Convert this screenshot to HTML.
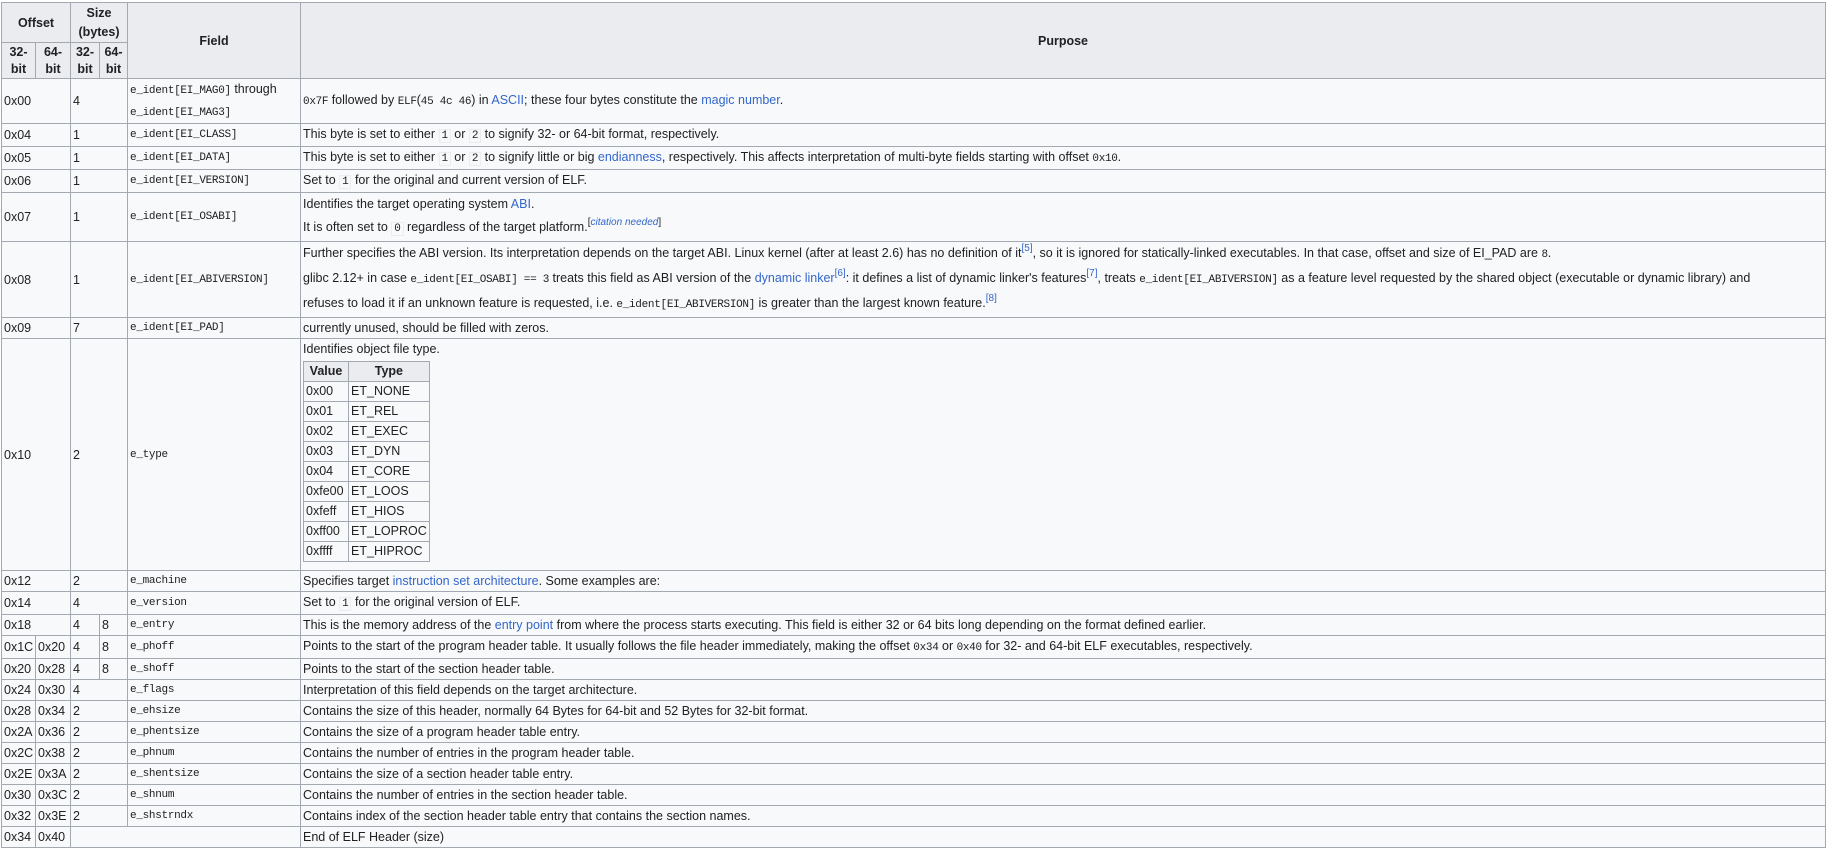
<!DOCTYPE html>
<html><head><meta charset="utf-8"><style>
body{margin:0;background:#fff;font-family:"Liberation Sans","Noto Sans CJK SC",sans-serif;font-size:12.5px;color:#202122}
table.w{position:absolute;left:1px;top:2px;width:1825px;border-collapse:collapse;table-layout:fixed;background:#f8f9fa}
table.w td,table.w th{border:1px solid #a2a9b1;padding:0 2px;vertical-align:middle;line-height:20px;overflow:hidden;white-space:nowrap}
th{background:#eaecf0;font-weight:bold;text-align:center}
code,.m{font-family:"Liberation Mono","Noto Sans CJK SC",monospace;font-size:11px;letter-spacing:-0.3px}
code.b{background:#f8f9fa;border:1px solid #eaecf0;padding:0 2px}
a{color:#3366cc;text-decoration:none}
sup{font-size:10px;line-height:0;vertical-align:6px}
table.n{border-collapse:collapse;margin:2px 0 4px 0;background:#f8f9fa}
table.n td,table.n th{border:1px solid #a2a9b1;padding:0 2px;line-height:19px;height:19px}
</style></head><body>
<table class="w">
<colgroup><col style="width:34px"><col style="width:35px"><col style="width:29px"><col style="width:28px"><col style="width:173px"><col></colgroup>
<tr style="height:40px"><th colspan="2">Offset</th><th colspan="2" style="line-height:19px">Size<br>(bytes)</th><th rowspan="2">Field</th><th rowspan="2">Purpose</th></tr>
<tr style="height:36px"><th style="line-height:17px">32-<br>bit</th><th style="line-height:17px">64-<br>bit</th><th style="line-height:17px">32-<br>bit</th><th style="line-height:17px">64-<br>bit</th></tr>
<tr style="height:43px"><td colspan="2">0x00</td><td colspan="2">4</td><td><span class="m">e_ident[EI_MAG0]</span> through<br><span class="m">e_ident[EI_MAG3]</span></td><td><code>0x7F</code> followed by <code>ELF</code>(<code>45 4c 46</code>) in <a>ASCII</a>; these four bytes constitute the <a>magic number</a>.</td></tr>
<tr style="height:20px"><td colspan="2">0x04</td><td colspan="2">1</td><td class="m">e_ident[EI_CLASS]</td><td>This byte is set to either <code class="b">1</code> or <code class="b">2</code> to signify 32- or 64-bit format, respectively.</td></tr>
<tr style="height:21px"><td colspan="2">0x05</td><td colspan="2">1</td><td class="m">e_ident[EI_DATA]</td><td>This byte is set to either <code class="b">1</code> or <code class="b">2</code> to signify little or big <a>endianness</a>, respectively. This affects interpretation of multi-byte fields starting with offset <code>0x10</code>.</td></tr>
<tr style="height:21px"><td colspan="2">0x06</td><td colspan="2">1</td><td class="m">e_ident[EI_VERSION]</td><td>Set to <code class="b">1</code> for the original and current version of ELF.</td></tr>
<tr style="height:48px"><td colspan="2">0x07</td><td colspan="2">1</td><td class="m">e_ident[EI_OSABI]</td><td style="line-height:23px">Identifies the target operating system <a>ABI</a>.<br>It is often set to <code class="b">0</code> regardless of the target platform.<sup>[<a><i>citation needed</i></a>]</sup></td></tr>
<tr style="height:71px"><td colspan="2">0x08</td><td colspan="2">1</td><td class="m">e_ident[EI_ABIVERSION]</td><td style="line-height:23px">Further specifies the ABI version. Its interpretation depends on the target ABI. Linux kernel (after at least 2.6) has no definition of it<sup><a>[5]</a></sup>, so it is ignored for statically-linked executables. In that case, offset and size of EI_PAD are <code>8</code>.<br>glibc 2.12+ in case <code>e_ident[EI_OSABI] == 3</code> treats this field as ABI version of the <a>dynamic linker</a><sup><a>[6]</a></sup>: it defines a list of dynamic linker's features<sup><a>[7]</a></sup>, treats <code>e_ident[EI_ABIVERSION]</code> as a feature level requested by the shared object (executable or dynamic library) and<br>refuses to load it if an unknown feature is requested, i.e. <code>e_ident[EI_ABIVERSION]</code> is greater than the largest known feature.<sup><a>[8]</a></sup></td></tr>
<tr style="height:21px"><td colspan="2">0x09</td><td colspan="2">7</td><td class="m">e_ident[EI_PAD]</td><td>currently unused, should be filled with zeros.</td></tr>
<tr style="height:232px"><td colspan="2">0x10</td><td colspan="2">2</td><td class="m">e_type</td><td style="vertical-align:top">Identifies object file type.
<table class="n"><tr><th style="width:40px">Value</th><th style="width:66px">Type</th></tr>
<tr><td>0x00</td><td>ET_NONE</td></tr><tr><td>0x01</td><td>ET_REL</td></tr><tr><td>0x02</td><td>ET_EXEC</td></tr><tr><td>0x03</td><td>ET_DYN</td></tr><tr><td>0x04</td><td>ET_CORE</td></tr><tr><td>0xfe00</td><td>ET_LOOS</td></tr><tr><td>0xfeff</td><td>ET_HIOS</td></tr><tr><td>0xff00</td><td>ET_LOPROC</td></tr><tr><td>0xffff</td><td>ET_HIPROC</td></tr></table></td></tr>
<tr style="height:21px"><td colspan="2">0x12</td><td colspan="2">2</td><td class="m">e_machine</td><td>Specifies target <a>instruction set architecture</a>. Some examples are:</td></tr>
<tr style="height:21px"><td colspan="2">0x14</td><td colspan="2">4</td><td class="m">e_version</td><td>Set to <code class="b">1</code> for the original version of ELF.</td></tr>
<tr style="height:20px"><td colspan="2">0x18</td><td>4</td><td>8</td><td class="m">e_entry</td><td>This is the memory address of the <a>entry point</a> from where the process starts executing. This field is either 32 or 64 bits long depending on the format defined earlier.</td></tr>
<tr style="height:21px"><td>0x1C</td><td>0x20</td><td>4</td><td>8</td><td class="m">e_phoff</td><td>Points to the start of the program header table. It usually follows the file header immediately, making the offset <code>0x34</code> or <code>0x40</code> for 32- and 64-bit ELF executables, respectively.</td></tr>
<tr style="height:21px"><td>0x20</td><td>0x28</td><td>4</td><td>8</td><td class="m">e_shoff</td><td>Points to the start of the section header table.</td></tr>
<tr style="height:21px"><td>0x24</td><td>0x30</td><td colspan="2">4</td><td class="m">e_flags</td><td>Interpretation of this field depends on the target architecture.</td></tr>
<tr style="height:21px"><td>0x28</td><td>0x34</td><td colspan="2">2</td><td class="m">e_ehsize</td><td>Contains the size of this header, normally 64 Bytes for 64-bit and 52 Bytes for 32-bit format.</td></tr>
<tr style="height:21px"><td>0x2A</td><td>0x36</td><td colspan="2">2</td><td class="m">e_phentsize</td><td>Contains the size of a program header table entry.</td></tr>
<tr style="height:21px"><td>0x2C</td><td>0x38</td><td colspan="2">2</td><td class="m">e_phnum</td><td>Contains the number of entries in the program header table.</td></tr>
<tr style="height:21px"><td>0x2E</td><td>0x3A</td><td colspan="2">2</td><td class="m">e_shentsize</td><td>Contains the size of a section header table entry.</td></tr>
<tr style="height:21px"><td>0x30</td><td>0x3C</td><td colspan="2">2</td><td class="m">e_shnum</td><td>Contains the number of entries in the section header table.</td></tr>
<tr style="height:21px"><td>0x32</td><td>0x3E</td><td colspan="2">2</td><td class="m">e_shstrndx</td><td>Contains index of the section header table entry that contains the section names.</td></tr>
<tr style="height:21px"><td>0x34</td><td>0x40</td><td colspan="3"></td><td>End of ELF Header (size)</td></tr>
</table>
</body></html>
